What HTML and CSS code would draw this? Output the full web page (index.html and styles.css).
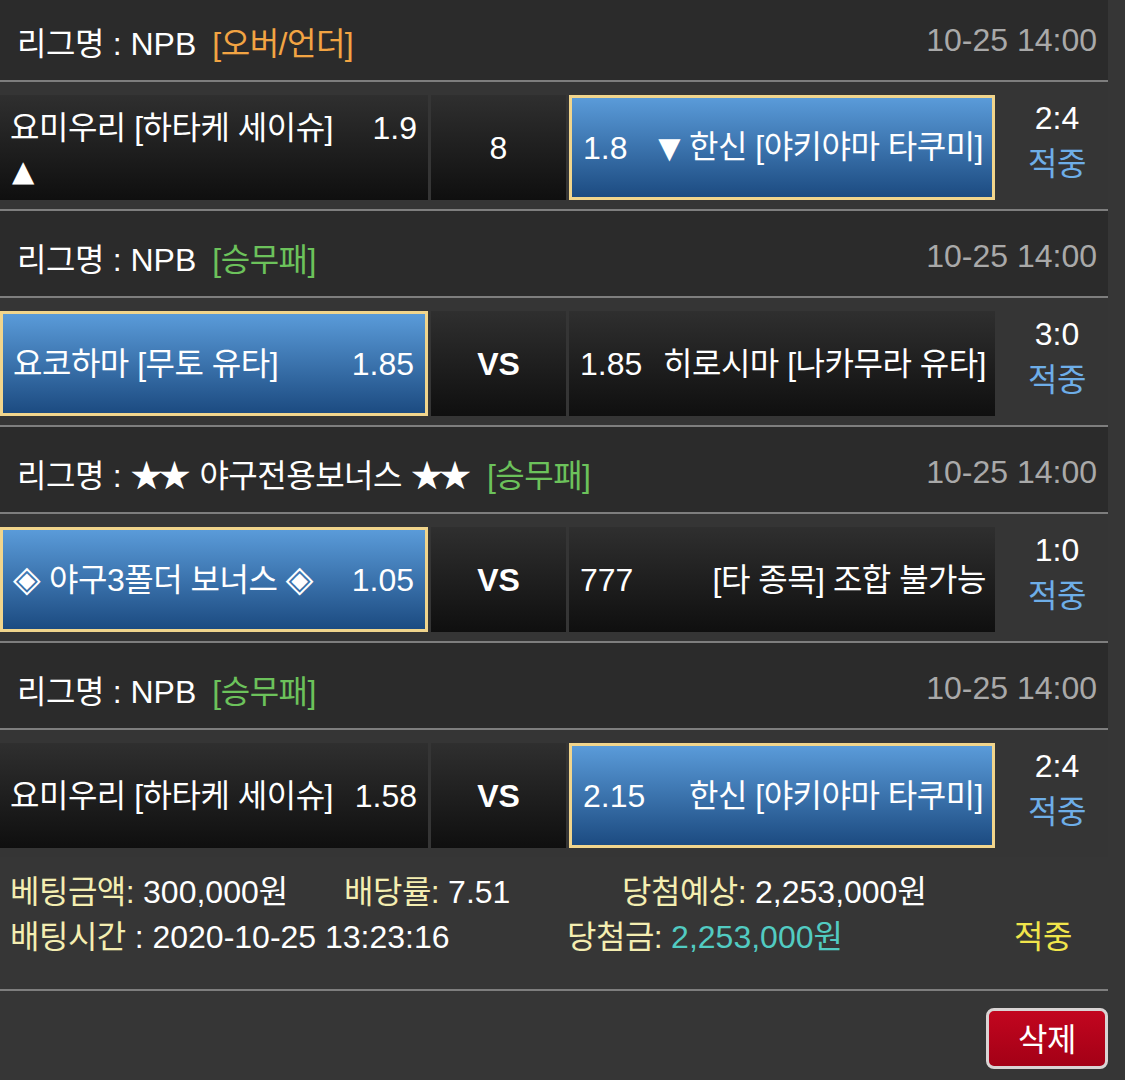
FILE: index.html
```html
<!DOCTYPE html>
<html lang="ko">
<head>
<meta charset="utf-8">
<title>베팅내역</title>
<link rel="stylesheet" href="styles.css">
</head>
<body>
<div class="board">
  <section class="game">
    <header class="league">
      <div class="league-name"><span class="ko">리그명</span> : NPB<span class="tag tag-ou ko">[오버/언더]</span></div>
      <div class="date">10-25 14:00</div>
    </header>
    <div class="match">
      <div class="pick home stack">
        <div class="line"><span class="team ko">요미우리 [하타케 세이슈]</span><span class="odds">1.9</span></div>
        <div class="line"><span class="arrow up">▲</span></div>
      </div>
      <div class="pick mid">8</div>
      <div class="pick away selected"><span class="odds">1.8</span><span class="team ko"><span class="arrow">▼</span> 한신 [야키야마 타쿠미]</span></div>
      <div class="result"><div class="score">2:4</div><div class="status ko">적중</div></div>
    </div>
  </section>

  <section class="game">
    <header class="league">
      <div class="league-name"><span class="ko">리그명</span> : NPB<span class="tag tag-wdl ko">[승무패]</span></div>
      <div class="date">10-25 14:00</div>
    </header>
    <div class="match">
      <div class="pick home selected"><span class="team ko">요코하마 [무토 유타]</span><span class="odds">1.85</span></div>
      <div class="pick mid vs">VS</div>
      <div class="pick away"><span class="odds">1.85</span><span class="team ko">히로시마 [나카무라 유타]</span></div>
      <div class="result"><div class="score">3:0</div><div class="status ko">적중</div></div>
    </div>
  </section>

  <section class="game">
    <header class="league">
      <div class="league-name"><span class="ko">리그명</span> : <span class="star">★★</span> <span class="ko">야구전용보너스</span> <span class="star">★★</span><span class="tag tag-wdl ko">[승무패]</span></div>
      <div class="date">10-25 14:00</div>
    </header>
    <div class="match">
      <div class="pick home selected"><span class="team ko"><span class="gem">◈</span> 야구3폴더 보너스 <span class="gem">◈</span></span><span class="odds">1.05</span></div>
      <div class="pick mid vs">VS</div>
      <div class="pick away"><span class="odds">777</span><span class="team ko">[타 종목] 조합 불가능</span></div>
      <div class="result"><div class="score">1:0</div><div class="status ko">적중</div></div>
    </div>
  </section>

  <section class="game last">
    <header class="league">
      <div class="league-name"><span class="ko">리그명</span> : NPB<span class="tag tag-wdl ko">[승무패]</span></div>
      <div class="date">10-25 14:00</div>
    </header>
    <div class="match">
      <div class="pick home"><span class="team ko">요미우리 [하타케 세이슈]</span><span class="odds">1.58</span></div>
      <div class="pick mid vs">VS</div>
      <div class="pick away selected"><span class="odds">2.15</span><span class="team ko">한신 [야키야마 타쿠미]</span></div>
      <div class="result"><div class="score">2:4</div><div class="status ko">적중</div></div>
    </div>
  </section>

  <div class="summary">
    <div class="sum-row">
      <span class="cell c1"><span class="lbl ko">베팅금액:</span> 300,000<span class="ko">원</span></span>
      <span class="cell c2"><span class="lbl ko">배당률:</span> 7.51</span>
      <span class="cell"><span class="lbl ko">당첨예상:</span> 2,253,000<span class="ko">원</span></span>
    </div>
    <div class="sum-row">
      <span class="cell d1"><span class="lbl ko">배팅시간</span> : 2020-10-25 13:23:16</span>
      <span class="cell d2"><span class="lbl ko">당첨금:</span> <span class="win">2,253,000<span class="ko">원</span></span></span>
      <span class="cell hit ko">적중</span>
    </div>
  </div>

  <div class="actions">
    <button class="btn-del ko" type="button">삭제</button>
  </div>
</div>
</body>
</html>
```

FILE: styles.css
```css
* {
  box-sizing: border-box;
}

html, body {
  margin: 0;
  padding: 0;
}

body {
  background: #363636;
  color: #ffffff;
  font-family: "Liberation Sans", "Noto Sans CJK KR", sans-serif;
  font-size: 32px;
  overflow: hidden;
}

.board {
  width: 1108px;
  margin-top: -5px;
}

.ko {
  letter-spacing: -0.5px;
}

/* league header */
.league {
  height: 87px;
  background: #2b2b2b;
  border-bottom: 2px solid #7e7e7e;
  display: flex;
  align-items: center;
  justify-content: space-between;
  padding: 6px 11px 0 17px;
}

.league-name {
  white-space: nowrap;
}

.tag {
  margin-left: 16px;
}

.tag-ou {
  color: #f2a443;
}

.tag-wdl {
  color: #6cc25b;
}

.star {
  letter-spacing: -4px;
  margin-right: 4px;
}

.date {
  color: #a9a9a9;
}

/* match row */
.match {
  height: 129px;
  display: grid;
  grid-template-columns: 428px 135px 426px 1fr;
  column-gap: 3px;
  padding: 13px 0 9px;
  border-bottom: 2px solid #7e7e7e;
  background: #353535;
}

.game.last .match {
  height: 127px;
  border-bottom: none;
}

.pick {
  height: 105px;
  background: linear-gradient(#2f2f2f, #0f0f0f);
  display: flex;
  align-items: center;
  justify-content: space-between;
  padding: 0 11px 0 10px;
  line-height: 46px;
  white-space: nowrap;
}

.pick.stack {
  flex-direction: column;
  justify-content: center;
  align-items: stretch;
}

.pick.stack .line {
  display: flex;
  justify-content: space-between;
}

.pick.away {
  padding: 0 9px 0 11px;
}

.pick.selected {
  background: linear-gradient(#5a9bd9, #1c4b81);
  border: 3px solid #f1d58c;
}

.pick.mid {
  justify-content: center;
  padding: 0;
}

.pick.vs {
  font-weight: bold;
}

.arrow {
  font-family: "DejaVu Sans", sans-serif;
  font-size: 29px;
  letter-spacing: 0;
}

.arrow.up {
  margin-left: 2px;
  line-height: 40px;
}

.gem {
  font-family: "DejaVu Sans", sans-serif;
  font-size: 36px;
  letter-spacing: 0;
}

.result {
  padding-left: 8px;
  text-align: center;
  line-height: 46px;
}

.status {
  color: #6eaee8;
}

/* summary */
.summary {
  padding: 13px 0 29px;
  border-bottom: 2px solid #7e7e7e;
}

.sum-row {
  display: flex;
  line-height: 45px;
  padding-left: 10px;
  white-space: nowrap;
}

.lbl {
  color: #f4eeb1;
}

.c1 {
  width: 334px;
}

.c2 {
  width: 278px;
}

.d1 {
  width: 557px;
}

.d2 {
  width: 447px;
}

.win {
  color: #52cbc2;
}

.hit {
  color: #f1e54b;
}

/* actions */
.actions {
  display: flex;
  justify-content: flex-end;
  padding-top: 17px;
}

.btn-del {
  width: 122px;
  height: 61px;
  background: linear-gradient(#c2061f, #a30016);
  border: 3px solid #d9d4d4;
  border-radius: 8px;
  color: #ffffff;
  font-family: "Liberation Sans", "Noto Sans CJK KR", sans-serif;
  font-size: 32px;
  padding: 0 0 4px;
}
```
